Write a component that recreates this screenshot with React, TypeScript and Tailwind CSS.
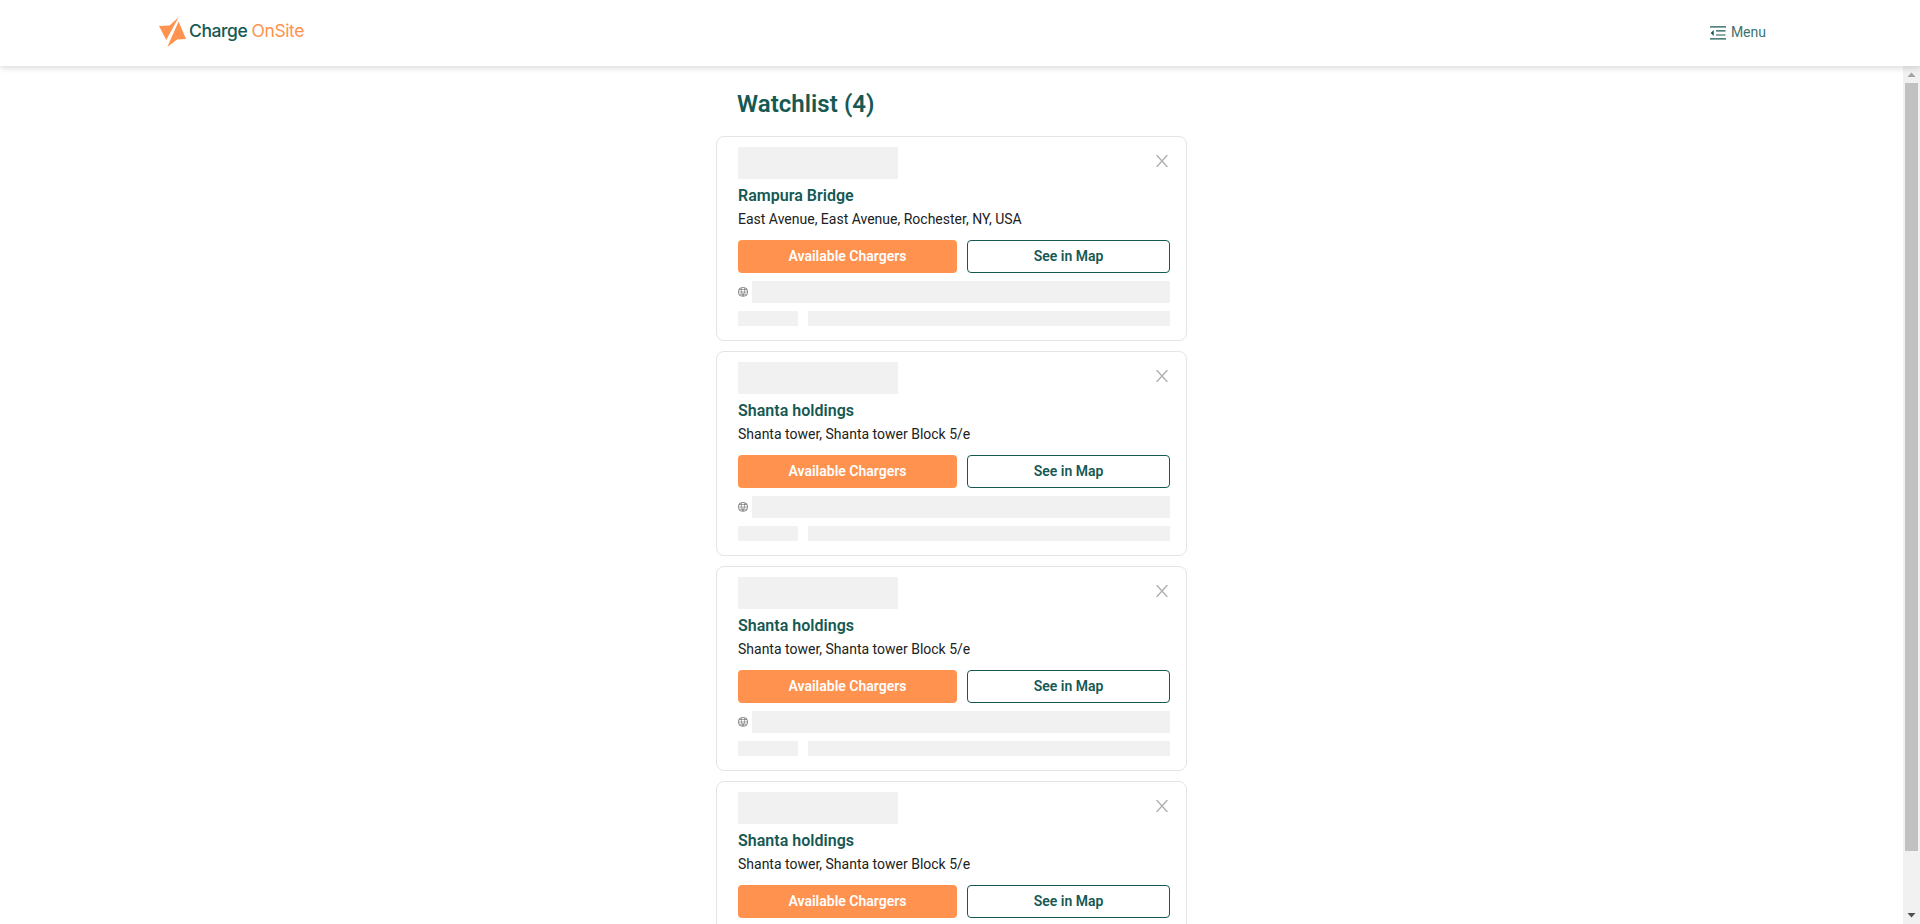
const stations = [
  { name: "Rampura Bridge", address: "East Avenue, East Avenue, Rochester, NY, USA" },
  { name: "Shanta holdings", address: "Shanta tower, Shanta tower Block 5/e" },
  { name: "Shanta holdings", address: "Shanta tower, Shanta tower Block 5/e" },
  { name: "Shanta holdings", address: "Shanta tower, Shanta tower Block 5/e" },
];

function Globe() {
  return (
    <svg viewBox="0 0 10 10" className="mt-1.5 h-2.5 w-2.5 shrink-0" fill="none" stroke="#555" strokeWidth="0.7">
      <rect x="0.5" y="0.6" width="9" height="8.6" rx="3.6" />
      <path d="M1 2.5h8M.6 5h8.8M1.6 7.2h6.8M3.4 1.2v3.6M6.6 1.2v3.6M3.4 5l1.6 4 1.6-4" strokeOpacity="0.75" />
    </svg>
  );
}

function CloseIcon() {
  return (
    <svg viewBox="0 0 12 12" className="h-3 w-3" fill="none" stroke="currentColor" strokeWidth="1.4">
      <path d="M.6 0 11.4 12M11.4 0 .6 12" />
    </svg>
  );
}

function MenuIcon() {
  return (
    <svg viewBox="0 0 16 14" className="h-3.5 w-4" fill="#165953">
      <path d="M0 .3h16v1.2H0zM6 4.3h9.5v1.1H6zM6 8.4h9.5v1.1H6zM0 12.3h16v1.2H0zM3.7 4v6L.7 7z" />
    </svg>
  );
}

function StationCard({ name, address }: { name: string; address: string }) {
  return (
    <article className="flex h-[205px] shrink-0 flex-col rounded-lg border border-[#e4e4e4] pt-2.5 pr-4 pl-[21px]">
      <div className="flex h-8 items-start justify-between">
        <div className="h-8 w-40 bg-[#f1f1f1]" />
        <button aria-label="Remove" className="mt-2 mr-0.5 text-[#b0b0b0]">
          <CloseIcon />
        </button>
      </div>
      <h2 className="mt-[5px] h-6 text-base leading-6 font-semibold tracking-[0.02px] text-[#165953]">{name}</h2>
      <p className="h-[22px] text-sm leading-[22px] text-[#212121]">{address}</p>
      <div className="mt-2.5 flex h-[33px] gap-2.5 text-sm font-semibold">
        <button className="w-[219px] rounded bg-[#ff924f] pb-0.5 text-white">Available Chargers</button>
        <button className="flex-1 rounded border border-[#165953] pb-0.5 text-[#165953]">See in Map</button>
      </div>
      <div className="mt-2 flex gap-1">
        <Globe />
        <div className="h-[22px] flex-1 bg-[#f1f1f1]" />
      </div>
      <div className="mt-2 flex h-[15px] gap-2.5">
        <div className="w-[60px] bg-[#f1f1f1]" />
        <div className="flex-1 bg-[#f1f1f1]" />
      </div>
    </article>
  );
}

export default function App() {
  return (
    <div className="flex h-screen flex-col overflow-hidden bg-white font-[Roboto,sans-serif]">
      <header className="z-10 flex h-[66px] shrink-0 items-start justify-between pr-[154px] pl-[159px] shadow-[0_2px_6px_rgba(0,0,0,0.15)]">
        <div className="mt-[17px] flex h-[30px] items-start">
          <svg viewBox="0 0 28 30" className="h-[30px] w-7" fill="#ff924f">
            <path d="M0 9 L10.5 8.5 L19.6 .3 L7.3 23Z" />
            <path d="M19.6 4.5 L27 22 L18 22.5 L8.3 30Z" />
          </svg>
          <div className="ml-[2px] font-[Inter,sans-serif] text-[17.5px] leading-7 font-medium tracking-[-0.42px] text-[#165953]">
            Charge <span className="font-normal text-[#ff924f]">OnSite</span>
          </div>
        </div>
        <button className="mt-[21px] flex h-[22px] items-start gap-[5px] text-sm leading-[22px] text-[#165953]">
          <span className="mt-[5px]">
            <MenuIcon />
          </span>
          <span className="opacity-85">Menu</span>
        </button>
      </header>
      <div className="flex min-h-0 flex-1">
        <main className="flex flex-1 flex-col items-center overflow-hidden">
          <section className="flex w-[471px] flex-col">
            <h1 className="mt-[22px] h-8 pl-[21px] text-2xl leading-8 font-semibold tracking-[0.05px] text-[#165953]">Watchlist (4)</h1>
            <div className="mt-4 flex flex-col gap-2.5">
              {stations.map((station, index) => (
                <StationCard key={index} {...station} />
              ))}
            </div>
          </section>
        </main>
        <div className="flex w-[17px] flex-col items-center justify-between bg-[#f1f1f1]">
          <svg viewBox="0 0 17 17" className="h-[17px] w-[17px]" fill="#a3a3a3">
            <path d="M8.5 6.5 L12.5 11h-8z" />
          </svg>
          <div className="mb-auto h-[768px] w-[13px] bg-[#c1c1c1]" />
          <svg viewBox="0 0 17 17" className="h-[17px] w-[17px]" fill="#505050">
            <path d="M8.5 10.5 L12.5 6h-8z" />
          </svg>
        </div>
      </div>
    </div>
  );
}
